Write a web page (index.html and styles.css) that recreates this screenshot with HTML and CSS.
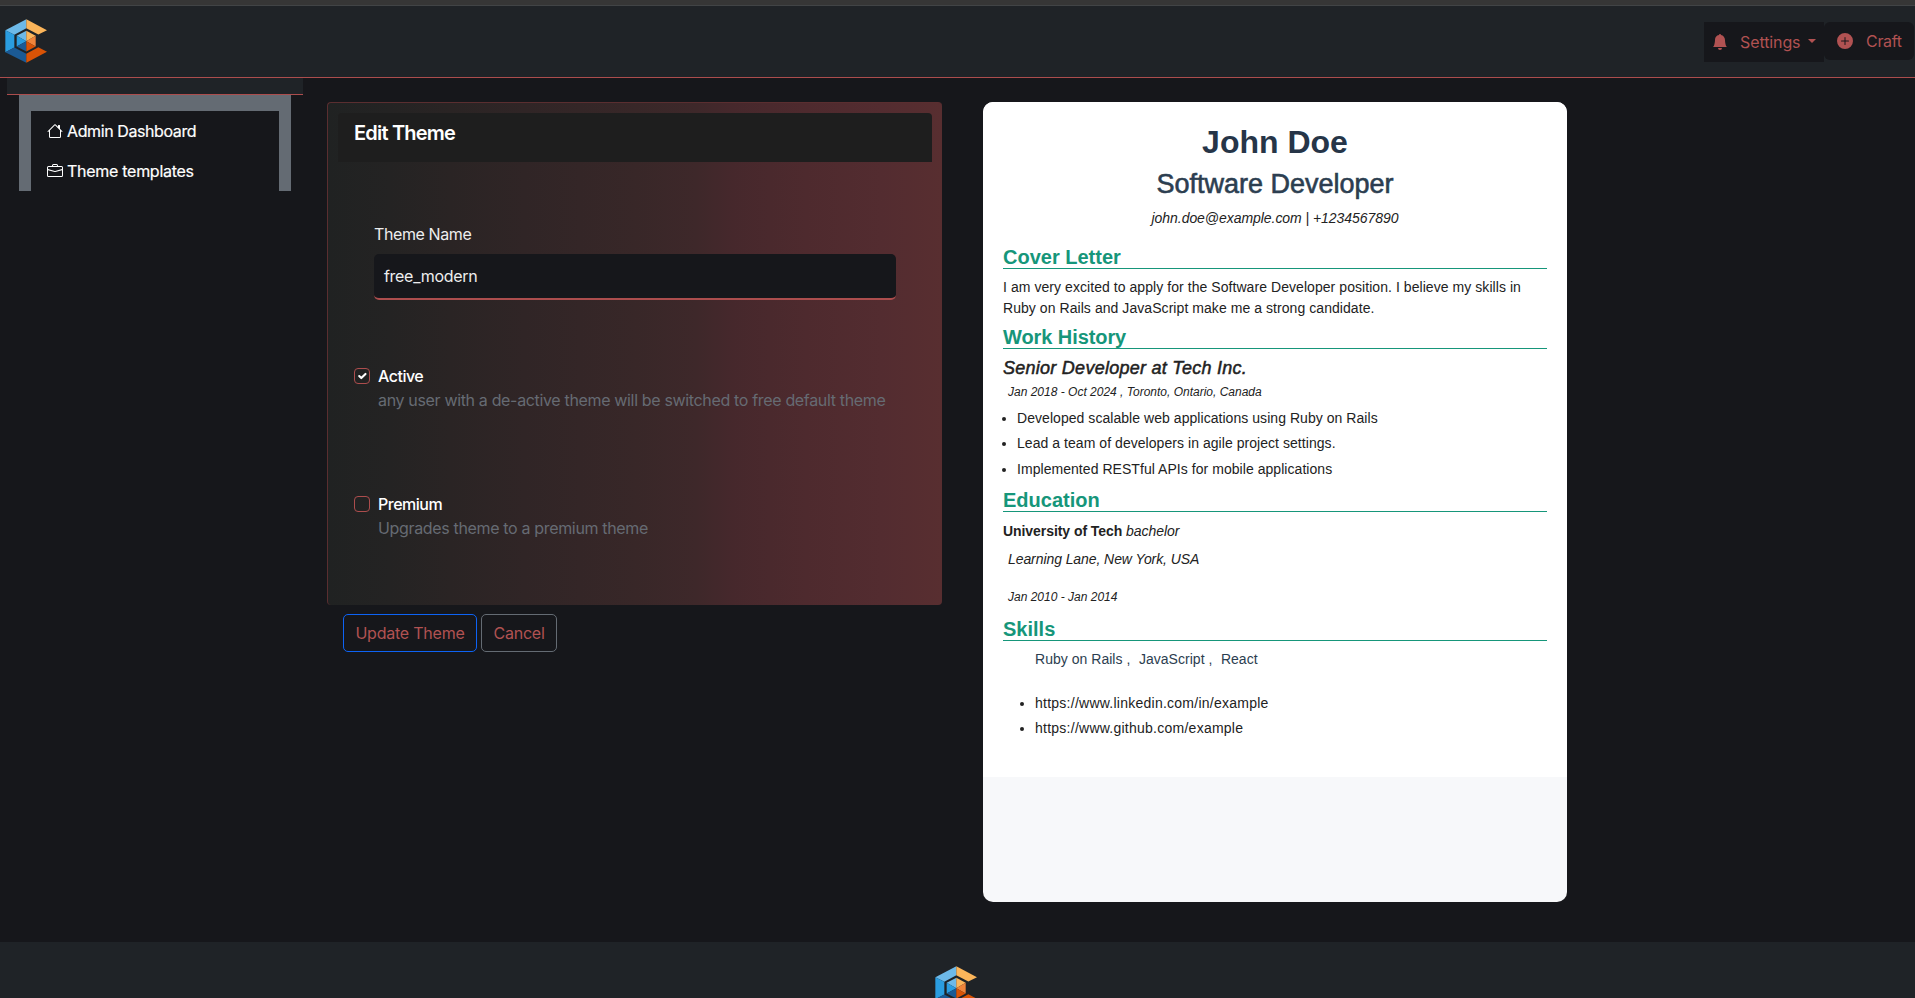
FILE: index.html
```html
<!DOCTYPE html>
<html lang="en">
<head>
<meta charset="utf-8">
<title>Edit Theme</title>
<link rel="stylesheet" href="styles.css">
</head>
<body>
<svg width="0" height="0" class="defs">
  <symbol id="logo" viewBox="15 57 126 131">
    <path fill="#6db9e8" d="M79 57 16 90l27 14 36-20z"/>
    <path fill="#2a9de0" d="m16 90 27 14v38l-27 14z"/>
    <path fill="#1b5a95" d="m16 156 27-14 36 19v27z"/>
    <path fill="#fbb55a" d="m79 57 62 33-26 13-36-19z"/>
    <path fill="#d95306" d="m79 188 62-33-26-14-36 20z"/>
    <path fill="#6db9e8" d="M79 123V92l-29 15z"/>
    <path fill="#2a9de0" d="M79 123 50 107v32z"/>
    <path fill="#1b5a95" d="M79 123 50 139l29 15z"/>
    <path fill="#fbb55a" d="M79 123V92l28 15z"/>
    <path fill="#f0843a" d="m79 123 28-16v32z"/>
    <path fill="#d95306" d="m79 123 28 16-28 15z"/>
  </symbol>
</svg>
<div class="page">
  <div class="chrome"></div>
  <header class="nav">
    <svg class="logo"><use href="#logo"/></svg>
    <div class="nav-actions">
      <a class="settings">
        <svg class="bell" width="16" height="16" viewBox="0 0 16 16" fill="currentColor"><path d="M8 16a2 2 0 0 0 2-2H6a2 2 0 0 0 2 2m.995-14.901a1 1 0 1 0-1.99 0A5 5 0 0 0 3 6c0 1.098-.5 6-2 7h14c-1.500-1-2-5.902-2-7 0-2.420-1.720-4.440-4.005-4.901"/></svg>
        <span>Settings</span><i class="caret"></i>
      </a>
      <a class="craft">
        <svg width="16" height="16" viewBox="0 0 16 16" fill="currentColor"><path d="M16 8A8 8 0 1 1 0 8a8 8 0 0 1 16 0M8.500 4.500a.5.5 0 0 0-1 0v3h-3a.5.5 0 0 0 0 1h3v3a.5.5 0 0 0 1 0v-3h3a.5.5 0 0 0 0-1h-3z"/></svg>
        <span>Craft</span>
      </a>
    </div>
  </header>
  <main class="main">
    <aside class="side">
      <div class="side-strip"></div>
      <nav class="side-frame">
        <a class="side-link"><svg width="16" height="16" viewBox="0 0 16 16" fill="currentColor"><path d="M8.707 1.500a1 1 0 0 0-1.414 0L.646 8.146a.5.5 0 0 0 .708.708L2 8.207V13.500A1.500 1.500 0 0 0 3.500 15h9a1.500 1.500 0 0 0 1.500-1.500V8.207l.646.647a.5.5 0 0 0 .708-.708L13 5.793V2.500a.5.5 0 0 0-.5-.5h-1a.5.5 0 0 0-.5.5v1.293zM13 7.207V13.500a.5.5 0 0 1-.5.5h-9a.5.5 0 0 1-.5-.5V7.207l5-5z"/></svg><span class="admin">Admin Dashboard</span></a>
        <a class="side-link"><svg width="16" height="16" viewBox="0 0 16 16" fill="currentColor"><path d="M6.500 1A1.500 1.500 0 0 0 5 2.500V3H1.500A1.500 1.500 0 0 0 0 4.500v8A1.500 1.500 0 0 0 1.500 14h13a1.500 1.500 0 0 0 1.500-1.500v-8A1.500 1.500 0 0 0 14.500 3H11v-.5A1.500 1.500 0 0 0 9.500 1zm0 1h3a.5.5 0 0 1 .5.5V3H6v-.5a.5.5 0 0 1 .5-.5m1.886 6.914L15 7.151V12.500a.5.5 0 0 1-.5.5h-13a.5.5 0 0 1-.5-.5V7.150l6.614 1.764a1.500 1.500 0 0 0 .772 0M1.500 4h13a.5.5 0 0 1 .5.5v1.616L8.129 7.948a.5.5 0 0 1-.258 0L1 6.116V4.500a.5.5 0 0 1 .5-.5"/></svg><span class="templates">Theme templates</span></a>
      </nav>
    </aside>
    <section class="editor">
      <div class="card">
        <h1 class="card-title">Edit Theme</h1>
        <div class="field">
          <label class="field-label">Theme Name</label>
          <div class="input">free_modern</div>
        </div>
        <div class="check">
          <span class="box"><svg width="14" height="14" viewBox="0 0 20 20" fill="none" stroke="#fff" stroke-width="3" stroke-linecap="round" stroke-linejoin="round"><path d="m6 10 3 3 6-6"/></svg></span>
          <div><div class="check-label">Active</div><div class="hint">any user with a de-active theme will be switched to free default theme</div></div>
        </div>
        <div class="check">
          <span class="box"></span>
          <div><div class="check-label">Premium</div><div class="hint">Upgrades theme to a premium theme</div></div>
        </div>
      </div>
      <div class="actions"><a class="btn primary">Update Theme</a><a class="btn cancel">Cancel</a></div>
    </section>
    <section class="preview">
      <article class="resume">
        <h1 class="name">John Doe</h1>
        <h2 class="role">Software Developer</h2>
        <p class="contact">john.doe@example.com | +1234567890</p>
        <h3 class="head">Cover Letter</h3>
        <p class="letter">I am very excited to apply for the Software Developer position. I believe my skills in<br>Ruby on Rails and JavaScript make me a strong candidate.</p>
        <h3 class="head work">Work History</h3>
        <h4 class="job">Senior Developer at Tech Inc.</h4>
        <p class="dates">Jan 2018 - Oct 2024 , Toronto, Ontario, Canada</p>
        <ul class="bullets">
          <li>Developed scalable web applications using Ruby on Rails</li>
          <li>Lead a team of developers in agile project settings.</li>
          <li>Implemented RESTful APIs for mobile applications</li>
        </ul>
        <h3 class="head">Education</h3>
        <p class="school"><b>University of Tech</b> <i>bachelor</i></p>
        <p class="address">Learning Lane, New York, USA</p>
        <p class="dates grad">Jan 2010 - Jan 2014</p>
        <h3 class="head">Skills</h3>
        <div class="skills"><span>Ruby on Rails ,</span><span>JavaScript ,</span><span>React</span></div>
        <ul class="bullets links">
          <li>https://www.linkedin.com/in/example</li>
          <li>https://www.github.com/example</li>
        </ul>
      </article>
    </section>
  </main>
  <footer class="footer"><svg class="logo"><use href="#logo"/></svg></footer>
</div>
</body>
</html>
```

FILE: styles.css
```css
* { box-sizing: border-box; }
body { margin: 0; background: #16171b; color: #fff; font: 16px/24px Inter, "Liberation Sans", sans-serif; overflow: hidden; }
h1, h2, h3, h4, p, ul { margin: 0; padding: 0; }
svg { display: block; flex: none; }
.defs { position: absolute; }
.page { display: flex; flex-direction: column; height: 998px; overflow: hidden; }
.chrome { flex: none; height: 6px; background: #363636; border-bottom: 1px solid #414446; }
.nav { flex: none; display: flex; justify-content: space-between; align-items: flex-start; height: 72px; padding: 13px 1px 0 5px; background: #1f2327; border-bottom: 1px solid #ac4d4d; }
.logo { width: 42px; height: 44px; }
.nav-actions { display: flex; margin-top: 3px; color: #b15252; }
.settings { display: flex; align-items: center; width: 120px; height: 40px; padding-left: 8px; background: #16171b; }
.settings span { margin-left: 12px; letter-spacing: -.1px; width: 61px; }
.caret { margin: -3px 0 0 7px; border: 4px solid transparent; border-top-color: currentColor; border-bottom: 0; }
.craft { display: flex; align-items: center; width: 90px; height: 38px; padding-left: 13px; gap: 13px; background: #16171b; border-radius: 6px; }
.craft span { letter-spacing: -.3px; }

.main { flex: none; display: flex; height: 864px; }
.side { width: 296px; margin-left: 7px; }
.side-strip { height: 17px; background: #1f2327; border-bottom: 1px solid #ac4d4d; }
.side-frame { width: 272px; height: 96px; margin-left: 12px; border: solid #646b73; border-width: 16px 12px 0; background: #16171b; }
.side-link { display: flex; align-items: center; height: 40px; padding-left: 16px; gap: 4px; -webkit-text-stroke: .2px #fff; }
.side-link span { white-space: nowrap; }
.admin { letter-spacing: -.4px; }
.templates { letter-spacing: -.28px; }

.editor { width: 615px; margin: 24px 0 0 24px; }
.card { height: 503px; padding: 10px; border: solid #5a2e30; border-width: 1px 0 0 1px; border-radius: 4px; background: linear-gradient(90deg, #202222, #242323 10%, #2a2424 20%, #302526 32%, #382728 50%, #3e282a 60%, #46282c 66%, #4e2a2e 78%, #532c30 90%, #582e30); }
.card-title { height: 49px; padding: 8px 16px; background: #1e1e1e; border-radius: 4px 4px 0 0; font-size: 20px; line-height: 24px; font-weight: 600; letter-spacing: -.8px; }
.field { margin: 60px 36px 0; }
.field-label { display: block; color: #eee; letter-spacing: -.4px; }
.input { height: 46px; margin-top: 8px; padding: 10px; border-bottom: 2px solid #ac4d4d; border-radius: 5px; background: #16171b; color: #eee; line-height: 24px; letter-spacing: -.3px; }
.check { display: flex; gap: 8px; margin: 64px 0 0 16px; }
.check + .check { margin-top: 80px; }
.box { flex: none; width: 16px; height: 16px; margin-top: 4px; border: 1px solid #ac4d4d; border-radius: 4px; }
.check-label { font-weight: 500; letter-spacing: -.5px; }
.hint { color: #666b73; white-space: nowrap; letter-spacing: -.34px; }
.actions { display: flex; gap: 4px; padding: 9px 16px; color: #b15252; }
.btn { height: 38px; border: 1px solid #646b73; border-radius: 5px; line-height: 36px; text-align: center; letter-spacing: -.22px; }
.primary { width: 134px; border-color: #0d63f5; }
.cancel { width: 76px; }

.preview { width: 584px; height: 800px; margin: 24px 0 0 41px; border-radius: 10px; background: #f7f8fa; overflow: hidden; color: #222; font: 14px/21px "Liberation Sans", sans-serif; }
.resume { height: 675px; padding: 21px 20px 0; background: #fff; white-space: nowrap; }
.name { text-align: center; color: #263548; font-size: 32px; line-height: 38px; }
.role { margin-top: 7px; text-align: center; color: #2c3e50; font-size: 27px; line-height: 32px; font-weight: 400; -webkit-text-stroke: .6px #2c3e50; }
.contact { margin: 8px 0 17px; text-align: center; font-style: italic; letter-spacing: -.05px; }
.head { border-bottom: 1px solid #16967a; color: #16967a; font-size: 20px; line-height: 22px; }
.work { letter-spacing: -.08px; }
.letter { margin: 8px 0 7px; letter-spacing: .06px; }
.job { margin: 8px 0 4px; font-size: 18px; line-height: 22px; font-style: italic; font-weight: 400; letter-spacing: .26px; -webkit-text-stroke: .5px #222; }
.dates { margin-left: 5px; font-size: 12px; line-height: 18px; font-style: italic; }
.bullets { margin: 7px 0 9px; padding-left: 14px; list-style: none; letter-spacing: .05px; }
.bullets li { display: flex; align-items: center; height: 21px; margin-bottom: 4px; }
.bullets li:nth-child(2) { margin-bottom: 5px; }
.bullets li:last-child { margin-bottom: 0; }
.bullets li::before { content: ""; width: 4px; height: 4px; margin: 1px 11px 0 -15px; border-radius: 50%; background: #222; }
.school { margin-top: 9px; letter-spacing: -.06px; }
.address { margin: 7px 0 18px 5px; font-style: italic; letter-spacing: -.08px; }
.grad { margin-bottom: 12px; }
.skills { display: flex; gap: 8.500px; margin: 8px 0 0 32px; color: #2c3e50; letter-spacing: .03px; }
.links { margin-top: 23px; padding-left: 32px; letter-spacing: .25px; }
.footer { flex: none; height: 56px; padding: 24px 0 0 935px; background: #1f2327; overflow: hidden; }
```
